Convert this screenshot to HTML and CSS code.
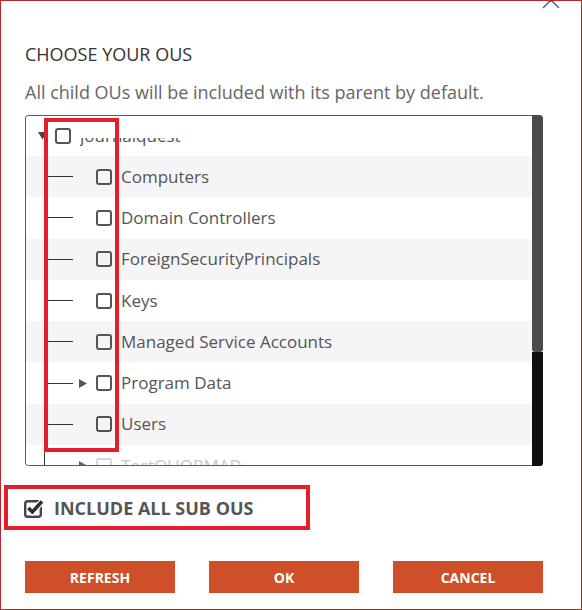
FILE: index.html
```html
<!DOCTYPE html>
<html lang="en">
<head>
<meta charset="utf-8">
<title>Choose your OUs</title>
<link rel="stylesheet" href="styles.css">
</head>
<body>
<div class="dialog">
  <div class="topbar">
    <svg class="collapse" width="20" height="10" viewBox="0 0 20 10"><path d="M2 9 L10 1 L18 9" fill="none" stroke="#4d7090" stroke-width="1.6"/></svg>
  </div>
  <h2 class="title">CHOOSE YOUR OUS</h2>
  <p class="subtitle">All child OUs will be included with its parent by default.</p>
  <div class="tree">
    <div class="tree-list">
      <div class="row root">
        <span class="toggle"><svg width="9" height="8" viewBox="0 0 9 8"><path d="M0 0 H9 L4.5 7.5 Z" fill="#444"/></svg></span>
        <span class="cb"></span>
        <span class="label clipped">journalquest</span>
      </div>
      <div class="row child alt"><span class="toggle"></span><span class="cb"></span><span class="label">Computers</span></div>
      <div class="row child"><span class="toggle"></span><span class="cb"></span><span class="label">Domain Controllers</span></div>
      <div class="row child alt"><span class="toggle"></span><span class="cb"></span><span class="label">ForeignSecurityPrincipals</span></div>
      <div class="row child"><span class="toggle"></span><span class="cb"></span><span class="label">Keys</span></div>
      <div class="row child alt"><span class="toggle"></span><span class="cb"></span><span class="label">Managed Service Accounts</span></div>
      <div class="row child"><span class="toggle"><svg width="8" height="9" viewBox="0 0 8 9"><path d="M0 0 L8 4.5 L0 9 Z" fill="#555"/></svg></span><span class="cb"></span><span class="label">Program Data</span></div>
      <div class="row child alt"><span class="toggle"></span><span class="cb"></span><span class="label">Users</span></div>
      <div class="row child faded"><span class="toggle"><svg width="8" height="9" viewBox="0 0 8 9"><path d="M0 0 L8 4.5 L0 9 Z" fill="#666"/></svg></span><span class="cb"></span><span class="label">TestOUORMAD</span></div>
    </div>
    <div class="scrollbar"><div class="thumb"></div><div class="track"></div></div>
    <div class="mark"></div>
  </div>
  <div class="include">
    <svg class="checked" width="20" height="20" viewBox="0 0 20 20">
      <rect x="1.2" y="3.2" width="15.6" height="15.6" rx="2.6" fill="none" stroke="#444" stroke-width="2.4"/>
      <path d="M4.4 10 L8.4 14 L18 3.4" fill="none" stroke="#fff" stroke-width="6"/>
      <path d="M4.4 10 L8.4 14 L18 3.4" fill="none" stroke="#2e2e2e" stroke-width="3.6"/>
    </svg>
    <span class="include-label">INCLUDE ALL SUB OUS</span>
  </div>
  <div class="actions">
    <button class="btn">REFRESH</button>
    <button class="btn">OK</button>
    <button class="btn">CANCEL</button>
  </div>
</div>
</body>
</html>
```
FILE: styles.css
```css
* { box-sizing: border-box; }
html, body { margin: 0; padding: 0; background: #fff; }
body { font-family: "Open Sans", "Noto Sans", sans-serif; }

.dialog {
  width: 582px;
  height: 610px;
  border: 1px solid #b8262c;
  padding: 0 38px 0 24px;
  overflow: hidden;
}

.topbar { height: 10px; display: flex; justify-content: flex-end; }
.collapse { display: block; margin-right: -18px; margin-top: -2px; }

.title {
  margin: 31px 0 0;
  font-size: 18px;
  line-height: 24px;
  font-weight: 400;
  color: #333;
}

.subtitle {
  margin: 14px 0 0;
  font-size: 18px;
  line-height: 24px;
  color: #666;
}

.tree {
  margin-top: 11px;
  height: 351px;
  display: flex;
  position: relative;
}

.tree-list {
  flex: 1;
  border: 1px solid #5a5a5a;
  border-right: 0;
  border-radius: 4px 0 0 4px;
  overflow: hidden;
}

.row {
  height: 41.3px;
  display: flex;
  align-items: center;
  background-color: #fff;
}
.row.root { height: 40px; padding-left: 9px; }
.row.child {
  padding-left: 50px;
  background-image: linear-gradient(#333, #333), linear-gradient(#333, #333);
  background-size: 1px 100%, 29px 1px;
  background-position: 18px 0, 18px 50%;
  background-repeat: no-repeat;
}
.row.alt { background-color: #f5f5f7; }

.toggle {
  width: 20px;
  padding-left: 3px;
  display: flex;
  align-items: center;
}
.toggle svg { display: block; }

.cb {
  width: 16px;
  height: 16px;
  border: 2px solid #555;
  border-radius: 3px;
  flex: none;
}

.label {
  margin-left: 9px;
  font-size: 17px;
  line-height: 22px;
  color: #555;
  white-space: nowrap;
}
.label.clipped { clip-path: inset(13px 0 0 0); }

.faded .cb { border-color: #d8d8d8; }
.faded .label { color: #c8c8c8; }

.scrollbar {
  width: 11px;
  display: flex;
  flex-direction: column;
  border-radius: 0 3px 3px 0;
  overflow: hidden;
}
.thumb { height: 237px; background: #4b4b4b; border-radius: 0 3px 3px 3px; }
.track { flex: 1; background: #0f0f0f; }

.mark {
  position: absolute;
  left: 19px;
  top: 3px;
  width: 75px;
  height: 334px;
  border: 4px solid #e3202a;
}

.include {
  margin: 19px 0 0 -21px;
  width: 306px;
  height: 45px;
  border: 4px solid #e3202a;
  display: flex;
  align-items: center;
  padding-left: 16px;
}
.checked { display: block; flex: none; }
.include-label {
  margin-left: 10px;
  font-size: 18px;
  font-weight: 700;
  color: #555;
  line-height: 22px;
}

.actions {
  margin-top: 31px;
  display: flex;
  gap: 34px;
}
.btn {
  width: 150px;
  height: 32px;
  border: 0;
  padding: 0;
  background: #cf5028;
  color: #fff;
  font-family: "Open Sans", "Noto Sans", sans-serif;
  font-size: 14px;
  font-weight: 700;
}
```
